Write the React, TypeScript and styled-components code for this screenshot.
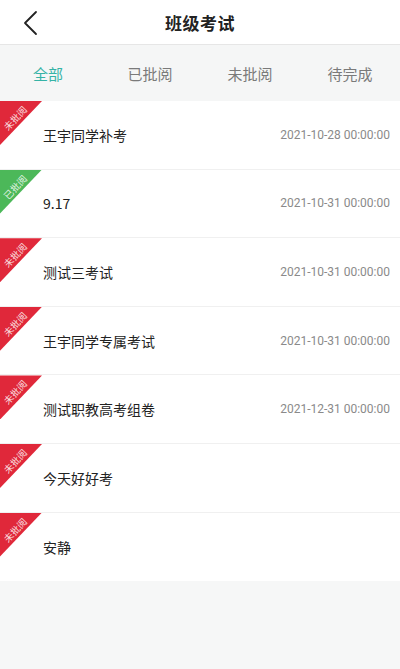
import React from 'react';
import styled, { createGlobalStyle } from 'styled-components';

const GlobalStyle = createGlobalStyle`
    html, body {
        margin: 0;
        padding: 0;
        background: #f6f7f7;
        font-family: "Noto Sans CJK SC", "Noto Sans", "Liberation Sans", sans-serif;
    }
    * {
        box-sizing: border-box;
    }
`;

type Status = 'done' | 'todo';

type Exam = {
    title: string;
    date?: string;
    status: Status;
};

const exams: Exam[] = [
    { title: '王宇同学补考', date: '2021-10-28 00:00:00', status: 'todo' },
    { title: '9.17', date: '2021-10-31 00:00:00', status: 'done' },
    { title: '测试三考试', date: '2021-10-31 00:00:00', status: 'todo' },
    { title: '王宇同学专属考试', date: '2021-10-31 00:00:00', status: 'todo' },
    { title: '测试职教高考组卷', date: '2021-12-31 00:00:00', status: 'todo' },
    { title: '今天好好考', status: 'todo' },
    { title: '安静', status: 'todo' },
];

const tabs = ['全部', '已批阅', '未批阅', '待完成'];

const Page = styled.div`
    width: 400px;
    min-height: 669px;
    background: #f6f7f7;
`;

const Header = styled.header`
    position: relative;
    height: 45px;
    background: #fff;
    border-bottom: 1px solid #e6e6e6;
    display: flex;
    align-items: center;
    justify-content: center;
`;

const BackButton = styled.button`
    position: absolute;
    left: 14px;
    top: 8px;
    width: 32px;
    height: 30px;
    border: 0;
    padding: 0;
    background: transparent;
    display: flex;
    align-items: center;
    justify-content: center;
`;

const Title = styled.h1`
    margin: 0;
    font-size: 17px;
    font-weight: 700;
    color: #222;
    letter-spacing: 0.5px;
`;

const TabBar = styled.nav`
    height: 56px;
    display: grid;
    grid-template-columns: repeat(4, 1fr);
    align-items: center;
    background: #f5f6f6;
`;

const Tab = styled.div<{ $active?: boolean }>`
    text-align: center;
    font-size: 15px;
    color: ${({ $active }) => ($active ? '#35b3a6' : '#7a7a7a')};
    padding-right: ${({ $active }) => ($active ? '4px' : '0')};
`;

const List = styled.ul`
    margin: 0;
    padding: 0;
    list-style: none;
    background: #fff;
`;

const Row = styled.li`
    position: relative;
    height: 68.6px;
    display: flex;
    align-items: center;
    padding: 0 10px 0 43px;
    border-bottom: 1px solid #f0f0f0;

    &:last-child {
        border-bottom: 0;
    }
`;

const Ribbon = styled.div<{ $status: Status }>`
    position: absolute;
    left: 0;
    top: 0;
    width: 42px;
    height: 44px;

    &::before {
        content: '';
        position: absolute;
        inset: 0;
        background: ${({ $status }) => ($status === 'done' ? '#4cb859' : '#e0283a')};
        clip-path: polygon(0 0, 100% 0, 0 100%);
    }
`;

const RibbonText = styled.span`
    position: absolute;
    left: 0;
    top: 12px;
    width: 30px;
    text-align: center;
    font-size: 9.5px;
    line-height: 10px;
    color: rgba(255, 255, 255, 0.85);
    transform: rotate(-47deg);
    white-space: nowrap;
`;

const ExamTitle = styled.span`
    flex: 1;
    font-size: 14px;
    color: #222;
`;

const ExamDate = styled.span`
    font-size: 12px;
    color: #8a8a8a;
    font-family: "Roboto", "Liberation Sans", sans-serif;
`;

const ChevronLeft = () => (
    <svg width="18" height="26" viewBox="0 0 18 26" fill="none">
        <path d="M15 2 L4 13 L15 24" stroke="#222" strokeWidth="1.8" strokeLinecap="round" strokeLinejoin="round" />
    </svg>
);

export default function App() {
    return (
        <Page>
            <GlobalStyle />
            <Header>
                <BackButton aria-label="返回">
                    <ChevronLeft />
                </BackButton>
                <Title>班级考试</Title>
            </Header>
            <TabBar>
                {tabs.map((t, i) => (
                    <Tab key={t} $active={i === 0}>
                        {t}
                    </Tab>
                ))}
            </TabBar>
            <List>
                {exams.map((e, i) => (
                    <Row key={i}>
                        <Ribbon $status={e.status}>
                            <RibbonText>{e.status === 'done' ? '已批阅' : '未批阅'}</RibbonText>
                        </Ribbon>
                        <ExamTitle>{e.title}</ExamTitle>
                        {e.date && <ExamDate>{e.date}</ExamDate>}
                    </Row>
                ))}
            </List>
        </Page>
    );
}
